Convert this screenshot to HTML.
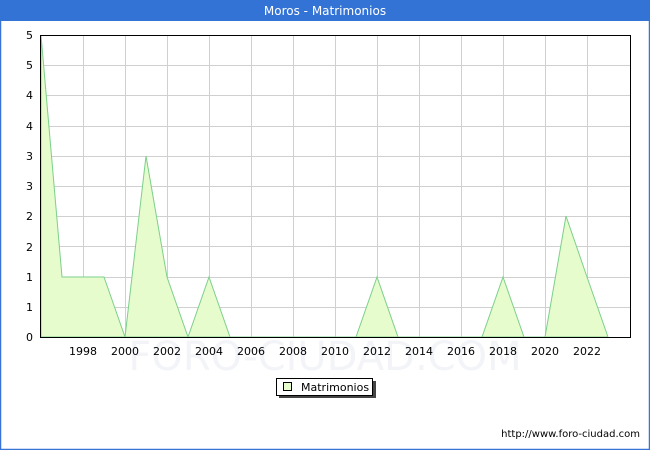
<!DOCTYPE html>
<html><head><style>
html,body{margin:0;padding:0;width:650px;height:450px;overflow:hidden;background:#fff}
</style></head><body>
<svg width="650" height="450" xmlns="http://www.w3.org/2000/svg" font-family="'DejaVu Sans', sans-serif">
<rect x="0" y="0" width="650" height="450" fill="#fff"/>
<rect x="0.5" y="0.5" width="649" height="449" fill="none" stroke="#3a73d6" stroke-width="1.5"/>
<rect x="0" y="0" width="650" height="21" fill="#3473d6"/>
<text x="325" y="15" text-anchor="middle" font-size="12" fill="#fff">Moros - Matrimonios</text>
<g stroke="#d0d0d0" stroke-width="1">
<line x1="40" y1="65.5" x2="630" y2="65.5"/><line x1="40" y1="95.5" x2="630" y2="95.5"/><line x1="40" y1="126.5" x2="630" y2="126.5"/><line x1="40" y1="156.5" x2="630" y2="156.5"/><line x1="40" y1="186.5" x2="630" y2="186.5"/><line x1="40" y1="216.5" x2="630" y2="216.5"/><line x1="40" y1="246.5" x2="630" y2="246.5"/><line x1="40" y1="277.5" x2="630" y2="277.5"/><line x1="40" y1="307.5" x2="630" y2="307.5"/>
<line x1="83.5" y1="35" x2="83.5" y2="337"/><line x1="125.5" y1="35" x2="125.5" y2="337"/><line x1="167.5" y1="35" x2="167.5" y2="337"/><line x1="209.5" y1="35" x2="209.5" y2="337"/><line x1="251.5" y1="35" x2="251.5" y2="337"/><line x1="293.5" y1="35" x2="293.5" y2="337"/><line x1="335.5" y1="35" x2="335.5" y2="337"/><line x1="377.5" y1="35" x2="377.5" y2="337"/><line x1="419.5" y1="35" x2="419.5" y2="337"/><line x1="461.5" y1="35" x2="461.5" y2="337"/><line x1="503.5" y1="35" x2="503.5" y2="337"/><line x1="545.5" y1="35" x2="545.5" y2="337"/><line x1="587.5" y1="35" x2="587.5" y2="337"/>
</g>
<text x="325" y="370" text-anchor="middle" font-size="40" fill="#f2f4f8">FORO-CIUDAD.COM</text>
<polygon fill="#e6fccc" stroke="#7ccf8c" stroke-width="1" points="41,337 41,35 62,277 83,277 104,277 125,337 146,156 167,277 188,337 209,277 230,337 356,337 377,277 398,337 482,337 503,277 524,337 545,337 566,216 587,277 608,337"/>
<rect x="40.5" y="35.5" width="590" height="302" fill="none" stroke="#000" stroke-width="1"/>
<g font-size="11" fill="#000">
<text x="33" y="341" text-anchor="end">0</text><text x="33" y="311" text-anchor="end">1</text><text x="33" y="281" text-anchor="end">1</text><text x="33" y="251" text-anchor="end">2</text><text x="33" y="220" text-anchor="end">2</text><text x="33" y="190" text-anchor="end">3</text><text x="33" y="160" text-anchor="end">3</text><text x="33" y="130" text-anchor="end">4</text><text x="33" y="99" text-anchor="end">4</text><text x="33" y="69" text-anchor="end">5</text><text x="33" y="39" text-anchor="end">5</text>
<g text-anchor="middle">
<text x="83" y="355">1998</text><text x="125" y="355">2000</text><text x="167" y="355">2002</text><text x="209" y="355">2004</text><text x="251" y="355">2006</text><text x="293" y="355">2008</text><text x="335" y="355">2010</text><text x="377" y="355">2012</text><text x="419" y="355">2014</text><text x="461" y="355">2016</text><text x="503" y="355">2018</text><text x="545" y="355">2020</text><text x="587" y="355">2022</text>
</g></g>
<rect x="279" y="381" width="97" height="17" fill="#444"/>
<rect x="276.5" y="378.5" width="96" height="17" fill="#fff" stroke="#000"/>
<rect x="283.5" y="382.5" width="8" height="8" fill="#e6fccc" stroke="#000"/>
<text x="301" y="391" font-size="11">Matrimonios</text>
<text x="640" y="437" text-anchor="end" font-size="10" fill="#000">http://www.foro-ciudad.com</text>
</svg>
</body></html>
